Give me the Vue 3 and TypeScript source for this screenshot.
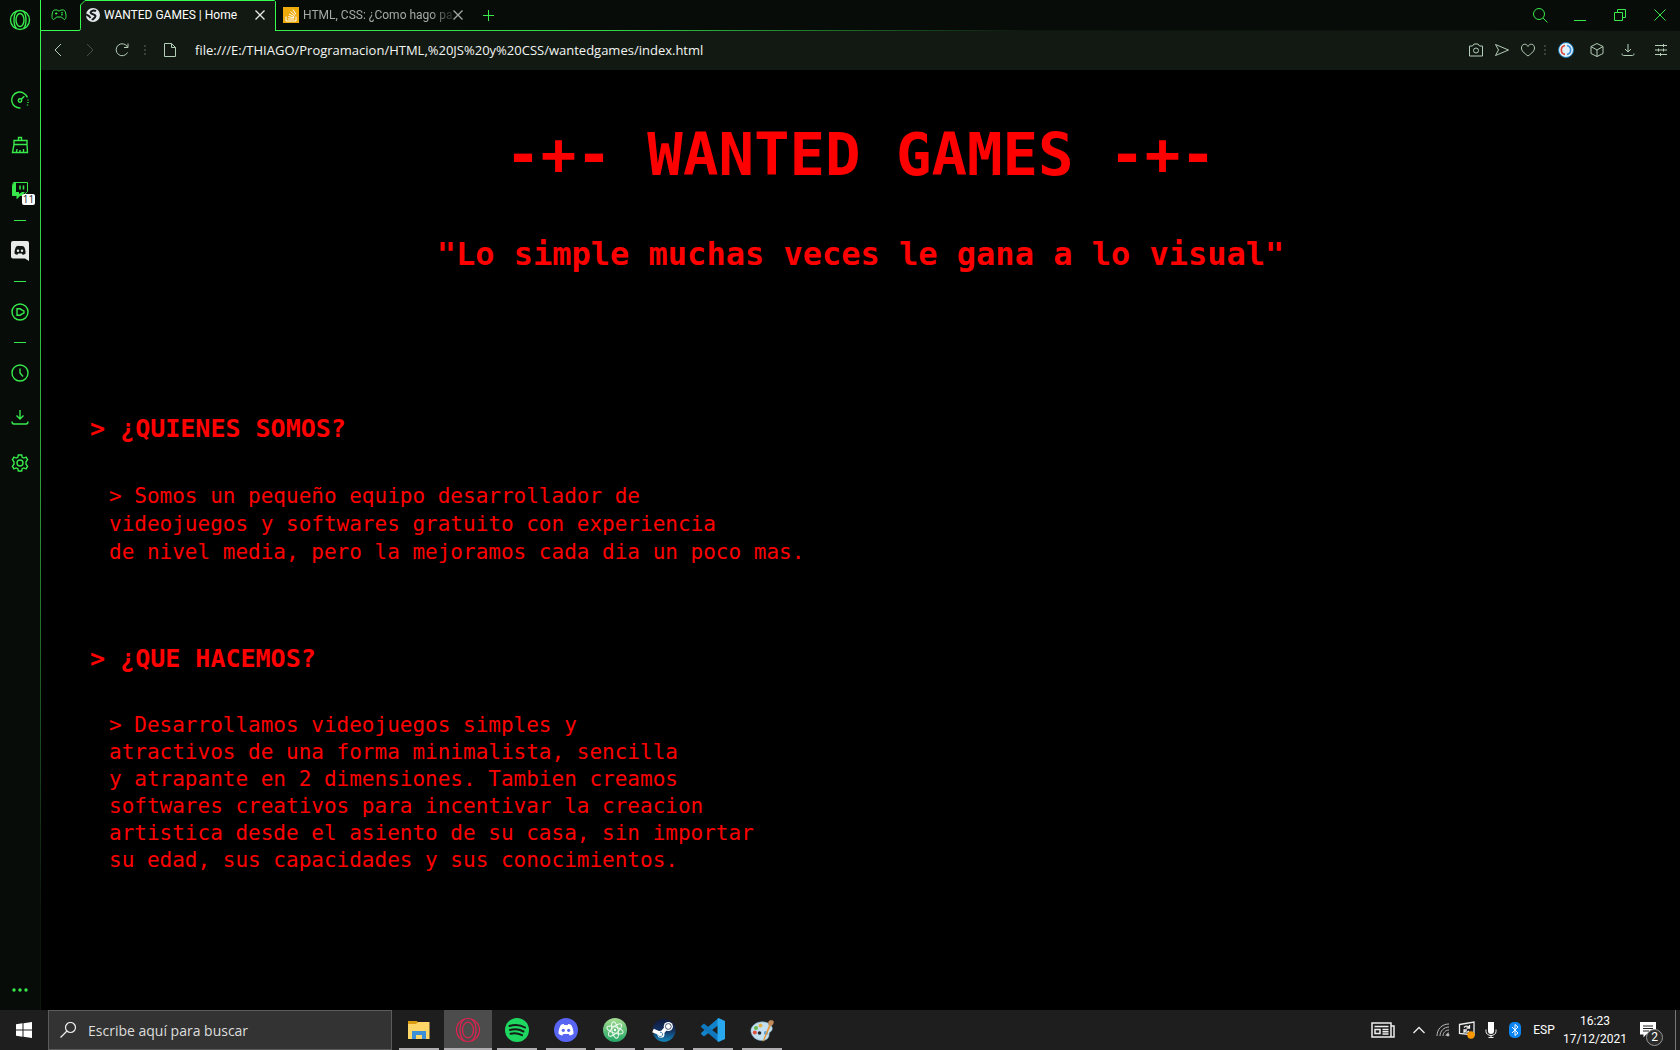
<script setup lang="ts">
import { ref } from 'vue'

interface Section {
  title: string
  lines: string[]
  dense: boolean
}

const address = ref('file:///E:/THIAGO/Programacion/HTML,%20JS%20y%20CSS/wantedgames/index.html')
const query = ref('')

const sections: Section[] = [
  {
    title: '> ¿QUIENES SOMOS?',
    dense: false,
    lines: [
      '> Somos un pequeño equipo desarrollador de',
      'videojuegos y softwares gratuito con experiencia',
      'de nivel media, pero la mejoramos cada dia un poco mas.',
    ],
  },
  {
    title: '> ¿QUE HACEMOS?',
    dense: true,
    lines: [
      '> Desarrollamos videojuegos simples y',
      'atractivos de una forma minimalista, sencilla',
      'y atrapante en 2 dimensiones. Tambien creamos',
      'softwares creativos para incentivar la creacion',
      'artistica desde el asiento de su casa, sin importar',
      'su edad, sus capacidades y sus conocimientos.',
    ],
  },
]
</script>

<template>
  <div class="desktop">
    <div class="browser">
      <nav class="sidebar" aria-label="Barra lateral">
        <button class="side-btn opera" aria-label="Opera GX">
          <svg width="22" height="22" viewBox="0 0 22 22" class="line">
            <circle cx="11" cy="11" r="9.5" />
            <ellipse cx="11" cy="11" rx="4" ry="6.5" />
            <path d="M8 2.200C4 5 4 17 8 19.800M14 2.200c4 2.800 4 14.800 0 17.600" />
          </svg>
        </button>
        <button class="side-btn" aria-label="GX Control">
          <svg width="18" height="18" viewBox="0 0 18 18" class="line">
            <path d="M9.500 17A8 8 0 1 1 16.300 6.500" />
            <circle cx="9" cy="9.500" r="1.700" />
            <path d="M10.300 8.200l3-3" />
            <path d="M17 8.500v1M17 11v1M16.500 13.500v1" />
          </svg>
        </button>
        <button class="side-btn" aria-label="Limpiador GX">
          <svg width="18" height="18" viewBox="0 0 18 18" class="line">
            <path d="M7.500 4.500V1.500h3v3M3 4.500h13v4H3zM3 8.500l-1.500 8h15L16 8.500M5.500 16l.5-3M9 16v-2M12.500 16v-3" />
          </svg>
        </button>
        <button class="side-btn" aria-label="Twitch">
          <svg width="18" height="18" viewBox="0 0 18 18">
            <path d="M2.500 1.500h14v9l-4 4H9l-3 3v-3H1.500v-10z" fill="none" stroke="#37e94b" />
            <path d="M1.500 4l2-2.500h1.500V11h3v2l3-2h3l-3 3.500H9l-3 3v-3H1.500z" fill="#37e94b" />
            <path d="M9 4.500v4M12.500 4.500v4" stroke="#37e94b" stroke-width="1.500" />
          </svg>
          <span class="count">11</span>
        </button>
        <hr />
        <button class="side-btn" aria-label="Discord">
          <svg width="18" height="20" viewBox="0 0 18 20">
            <path d="M2 0h14a2 2 0 0 1 2 2v18l-4-2.500H2a2 2 0 0 1-2-2V2a2 2 0 0 1 2-2z" fill="#e8eae8" />
            <path d="M3.500 12.500c0-3 .7-5.500 1.800-7 1-.6 2-.8 2.500-.5h2.500c.8-.3 1.700 0 2.500.5 1.200 1.500 1.800 4 1.800 7-1 1-2 1.300-3 1.300l-.8-1.200H7.200L6.400 13.800c-1 0-2-.4-2.900-1.300z" fill="#101510" />
            <circle cx="7" cy="9.800" r="1.200" fill="#e8eae8" /><circle cx="11" cy="9.800" r="1.200" fill="#e8eae8" />
          </svg>
        </button>
        <hr />
        <button class="side-btn" aria-label="Reproductor">
          <svg width="18" height="18" viewBox="0 0 18 18" class="line">
            <circle cx="9" cy="9" r="8" />
            <path d="M6 5.800v6.400h3l4-2.400V8.200L9 5.800z" />
          </svg>
        </button>
        <hr />
        <button class="side-btn" aria-label="Historial">
          <svg width="18" height="18" viewBox="0 0 18 18" class="line">
            <circle cx="9" cy="9" r="8" />
            <path d="M9 4.500V9l3 3.500" />
          </svg>
        </button>
        <button class="side-btn" aria-label="Descargas">
          <svg width="18" height="18" viewBox="0 0 18 18" class="line">
            <path d="M9 1v9M5.500 6.500L9 10l3.500-3.500M1 12.500c0 2 .5 2.500 2 2.500h12c1.500 0 2-.5 2-2.500" />
          </svg>
        </button>
        <button class="side-btn" aria-label="Ajustes">
          <svg width="18" height="18" viewBox="0 0 18 18" class="line">
            <circle cx="9" cy="9" r="3" />
            <path d="M7.300 1h3.400l.5 2.300 1.600.8 2.300-.9 1.500 2.600-1.600 2v2.400l1.600 2-1.500 2.600-2.300-.9-1.600.8-.5 2.300H7.300l-.5-2.300-1.600-.8-2.300.9-1.500-2.600 1.600-2V7.800l-1.600-2 1.500-2.600 2.300.9 1.600-.8z" />
          </svg>
        </button>
        <button class="side-btn more" aria-label="Más">
          <svg width="18" height="4" viewBox="0 0 18 4" fill="#37e94b">
            <circle cx="3" cy="2" r="1.700" /><circle cx="9" cy="2" r="1.700" /><circle cx="15" cy="2" r="1.700" />
          </svg>
        </button>
      </nav>

      <div class="window">
        <header class="tabs">
          <button class="corner" aria-label="GX Corner">
            <svg width="16" height="12" viewBox="0 0 16 12" class="line">
              <path d="M3.500 1h3l.8 1h1.400l.8-1h3C14 1 15 4 15 7.500c0 3-1.500 3.500-2.500 2.500l-2-2h-5l-2 2C2.500 11 1 10.500 1 7.500 1 4 2 1 3.500 1z" />
              <path d="M4 4.500h2.400M5.200 3.300v2.400M10 3.800h2M10 5.800h2" />
            </svg>
          </button>
          <div class="tab active">
            <svg class="outline" viewBox="0 0 198 31" preserveAspectRatio="none">
              <path d="M0 31V30.500q1.500 0 1.500-2V5L6 .5H196.500V31" fill="#121912" />
              <path d="M0 30.500q1.500 0 1.500-2V5L6 .5H195.500l1 1V31" fill="none" stroke="#37ff50" />
            </svg>
            <button class="tab-label">
              <svg width="14" height="14" viewBox="0 0 14 14">
                <circle cx="7" cy="7" r="7" fill="#e4e8ec" />
                <path d="M10 3.200C8 2 5 2.500 4.500 4.500c0 2 4.500 1.500 5 3.500 0 2-2.500 2.500-3.500 4M0 6.500l3 1.500 1.500 2" fill="none" stroke="#15191a" stroke-width="2" />
              </svg>
              <span class="caption">WANTED GAMES | Home</span>
            </button>
            <button class="tab-close" aria-label="Cerrar pestaña">
              <svg width="10" height="10" viewBox="0 0 10 10"><path d="M.5.5l9 9M9.500.5l-9 9" stroke="#e8ece8" stroke-width="1.300" /></svg>
            </button>
          </div>
          <div class="tab idle">
            <button class="tab-label">
              <svg width="16" height="16" viewBox="0 0 16 16">
                <path d="M0 0h16v16H0z" fill="#efaa0c" />
                <path d="M3 9.500V14h10V9.500M5 12h6M5.200 9.600l5.800 1.200M6 7l5.300 2.700M7.700 4.500l4.300 4M10 2.500l3 5" fill="none" stroke="#fff" />
              </svg>
              <span class="caption">HTML, CSS: ¿Como hago pa</span>
            </button>
            <button class="tab-close" aria-label="Cerrar pestaña">
              <svg width="10" height="10" viewBox="0 0 10 10"><path d="M.5.5l9 9M9.500.5l-9 9" stroke="#a4aaa4" stroke-width="1.300" /></svg>
            </button>
          </div>
          <button class="add" aria-label="Nueva pestaña">
            <svg width="11" height="11" viewBox="0 0 11 11" class="line"><path d="M5.500 0v11M0 5.500h11" /></svg>
          </button>
          <div class="controls">
            <button aria-label="Buscar pestañas">
              <svg width="16" height="16" viewBox="0 0 16 16" class="line"><circle cx="7" cy="7" r="5.500" /><path d="M11 11l4.500 4.500" /></svg>
            </button>
            <button aria-label="Minimizar">
              <svg width="12" height="14" viewBox="0 0 12 14" class="line"><path d="M0 12.500h12" /></svg>
            </button>
            <button aria-label="Restaurar">
              <svg width="12" height="12" viewBox="0 0 12 12" class="line"><path d="M.5 3.500h8v8h-8zM3.500 3.500v-3h8v8h-3" /></svg>
            </button>
            <button aria-label="Cerrar">
              <svg width="12" height="12" viewBox="0 0 12 12" class="line"><path d="M.5.5l11 11M11.500.5l-11 11" /></svg>
            </button>
          </div>
        </header>

        <div class="toolbar">
          <button class="nav-btn" aria-label="Atrás">
            <svg width="16" height="16" viewBox="0 0 16 16"><path d="M11 2L5 8l6 6" /></svg>
          </button>
          <button class="nav-btn off" aria-label="Adelante">
            <svg width="16" height="16" viewBox="0 0 16 16"><path d="M5 2l6 6-6 6" /></svg>
          </button>
          <button class="nav-btn" aria-label="Recargar">
            <svg width="16" height="16" viewBox="0 0 16 16"><path d="M13.500 10.500a6 6 0 1 1 0-5.500M14 1.500v4h-4" /></svg>
          </button>
          <span class="grip"></span>
          <button class="file-btn" aria-label="Información del sitio">
            <svg width="14" height="16" viewBox="0 0 14 16"><path d="M1.500 1.500h7l4 4v9h-11zM8.500 1.500v4h4" /></svg>
          </button>
          <input v-model="address" class="address" type="text" aria-label="Dirección" spellcheck="false" />
          <button class="tool" aria-label="Captura">
            <svg width="16" height="14" viewBox="0 0 16 14"><path d="M1.500 3h3l1.500-2h4l1.500 2h3v10h-13z" /><circle cx="8" cy="7.500" r="2.500" /></svg>
          </button>
          <button class="tool" aria-label="Mi Flow">
            <svg width="16" height="14" viewBox="0 0 16 14"><path d="M1.500 1.500L14.500 7l-13 5.500L4.500 7z" /></svg>
          </button>
          <button class="tool" aria-label="Favoritos">
            <svg width="16" height="14" viewBox="0 0 16 14"><path d="M8 13C4 10 1.500 8 1.500 5 1.500 .5 6.500 0 8 3.500 9.500 0 14.500 .5 14.500 5c0 3-2.500 5-6.500 8z" /></svg>
          </button>
          <span class="grip small"></span>
          <button class="tool wide" aria-label="Extensión">
            <svg width="16" height="16" viewBox="0 0 16 16">
              <circle cx="8" cy="8" r="7.500" fill="#dff1fb" stroke="#1474ac" />
              <path d="M7 3.500A4.600 4.600 0 0 0 7 12.500" stroke="#df4334" stroke-width="1.600" />
              <path d="M9 3.500A4.600 4.600 0 0 1 9 12.500" stroke="#3d8ed8" stroke-width="1.600" />
            </svg>
          </button>
          <button class="tool cube" aria-label="Extensiones">
            <svg width="14" height="16" viewBox="0 0 14 16"><path d="M7 1.500l6 3v7l-6 3-6-3v-7zM1 4.500L7 8l6-3.500M7 8v6.500" /></svg>
          </button>
          <button class="tool wide" aria-label="Descargas">
            <svg width="14" height="14" viewBox="0 0 14 14"><path d="M7 1v8M4 6l3 3 3-3M1 10.500c0 1.500.5 2 1.500 2h9c1 0 1.500-.5 1.500-2" /></svg>
          </button>
          <button class="tool last" aria-label="Configuración fácil">
            <svg width="12" height="12" viewBox="0 0 12 12"><path d="M0 1.500h12M0 6h12M0 10.500h12M8.500 0v3M3.500 4.500v3M8.500 4.500v3M5.500 9v3" /></svg>
          </button>
        </div>

        <main class="page">
          <h1>-+- WANTED GAMES -+-</h1>
          <p class="motto">"Lo simple muchas veces le gana a lo visual"</p>
          <section v-for="section in sections" :key="section.title">
            <h2>{{ section.title }}</h2>
            <p :class="{ dense: section.dense }">
              <template v-for="(line, i) in section.lines" :key="i">{{ line }}<br /></template>
            </p>
          </section>
        </main>
      </div>
    </div>

    <footer class="taskbar">
      <button class="start" aria-label="Inicio">
        <svg width="16" height="16" viewBox="0 0 16 16" fill="#fff"><path d="M0 2.200l6.500-.9v6.200H0zM7.500 1.200L16 0v7.500H7.500zM0 8.500h6.500v6.200L0 13.800zM7.500 8.500H16V16l-8.500-1.200z" /></svg>
      </button>
      <label class="search">
        <svg width="16" height="16" viewBox="0 0 16 16" fill="none" stroke="#eee" stroke-width="1.200"><circle cx="10.500" cy="5.500" r="5" /><path d="M7 9l-6.500 6.500" /></svg>
        <input v-model="query" type="text" placeholder="Escribe aquí para buscar" aria-label="Buscar" />
      </label>
      <div class="apps">
        <button aria-label="Explorador de archivos">
          <svg width="24" height="24" viewBox="0 0 24 24">
            <path d="M1 3h9l1 2h11v3H1z" fill="#dc9d12" /><path d="M1 6h8l2-2h11.500v17H1z" fill="#ffd768" />
            <path d="M5 21v-8h14v8h-4v-4H9v4z" fill="#3d8fd6" />
          </svg>
        </button>
        <button class="current" aria-label="Opera GX">
          <svg width="26" height="26" viewBox="0 0 26 26" fill="none" stroke="#e3204f" stroke-width="1.200">
            <circle cx="13" cy="13" r="11.500" /><ellipse cx="13" cy="13" rx="5.500" ry="7.800" />
            <path d="M9.500 2C3.500 6 3.500 20 9.500 24M16.500 2c6 4 6 18 0 22" />
          </svg>
        </button>
        <button aria-label="Spotify">
          <svg width="24" height="24" viewBox="0 0 24 24">
            <circle cx="12" cy="12" r="12" fill="#1ed760" />
            <path d="M4.500 8c5-1.500 11-1 15.500 1.500M5 12c4.500-1.300 9.500-.7 13.500 1.500M5.500 15.800c4-1 7.800-.5 11.500 1.400" fill="none" stroke="#161b18" stroke-width="2" stroke-linecap="round" />
          </svg>
        </button>
        <button aria-label="Discord">
          <svg width="24" height="24" viewBox="0 0 24 24">
            <circle cx="12" cy="12" r="12" fill="#5865f2" />
            <path d="M4.500 15.800c0-3.600.8-6.400 2.300-8.800 1-.6 2-.9 3-1l.6 1h3.200l.6-1c1 .1 2 .4 3 1 1.500 2.400 2.300 5.200 2.300 8.800-1.200 1-2.500 1.500-3.800 1.700l-1-1.500H9.300l-1 1.500c-1.300-.2-2.600-.7-3.800-1.700z" fill="#fff" />
            <circle cx="9.300" cy="12.300" r="1.600" fill="#5865f2" /><circle cx="14.700" cy="12.300" r="1.600" fill="#5865f2" />
          </svg>
        </button>
        <button aria-label="Atom">
          <svg width="24" height="24" viewBox="0 0 24 24">
            <defs><linearGradient id="atom" x1="0" y1="0" x2="0" y2="1"><stop offset="0" stop-color="#a5dc90" /><stop offset="1" stop-color="#22a565" /></linearGradient></defs>
            <circle cx="12" cy="12" r="12" fill="url(#atom)" />
            <g fill="none" stroke="#eefaf0"><ellipse cx="12" cy="12" rx="3.200" ry="8.500" transform="rotate(-12 12 12)" /><ellipse cx="12" cy="12" rx="3.200" ry="8.500" transform="rotate(48 12 12)" /><ellipse cx="12" cy="12" rx="3.200" ry="8.500" transform="rotate(108 12 12)" /></g>
            <circle cx="12" cy="12" r="1.200" fill="#fff" />
          </svg>
        </button>
        <button aria-label="Steam">
          <svg width="24" height="24" viewBox="0 0 24 24">
            <defs><linearGradient id="steam" x1="0" y1="0" x2="0" y2="1"><stop offset="0" stop-color="#101a3e" /><stop offset=".5" stop-color="#12305f" /><stop offset="1" stop-color="#1689bd" /></linearGradient></defs>
            <path d="M1 9a11.500 11.500 0 1 1 .5 8z" fill="url(#steam)" />
            <path d="M1 12.500l8 3.500 6-7" fill="none" stroke="#fff" stroke-width="3.800" />
            <circle cx="9" cy="16.300" r="3.500" fill="#fff" /><path d="M6.500 17.500a2.200 2.200 0 1 0 1.500-3.300" fill="none" stroke="#176a98" stroke-width=".8" />
            <circle cx="16.300" cy="8.500" r="4.600" fill="#fff" /><circle cx="16.300" cy="8.500" r="2.900" fill="none" stroke="#1c3055" stroke-width=".8" />
          </svg>
        </button>
        <button aria-label="Visual Studio Code">
          <svg width="24" height="24" viewBox="0 0 24 24">
            <path d="M17.500 0v7L3 18.500l-3-2.500v-1z" fill="#1283cb" /><path d="M17.500 24v-7L3 5.500 0 8v1z" fill="#0f78be" />
            <path d="M17.500 0L24 3v18l-6.500 3-1-1V1z" fill="#28a8ef" />
          </svg>
        </button>
        <button aria-label="Paint">
          <svg width="24" height="24" viewBox="0 0 24 24">
            <path d="M1 14C0 8 7 3 14 4c7 .8 9 5 8 8-.8 2-3 2-3 4 .5 4-3 7-8 6.500S2 19 1 14z" fill="#c3dff0" stroke="#88aec7" stroke-width=".6" />
            <circle cx="6" cy="10" r="2" fill="#67b84b" /><circle cx="10.500" cy="7.500" r="2" fill="#e3b24c" /><circle cx="4.800" cy="14.500" r="2" fill="#de5041" /><circle cx="9.500" cy="15" r="1.800" fill="#25272a" /><circle cx="16" cy="15" r="2" fill="#559bd5" />
            <path d="M12.500 23.500L19 7l1.800.8L14 23z" fill="#e39a3e" /><path d="M18.500 7c-1-3 .5-4.500 2-5 .5 1 2-.5 3 1 .8 2-.5 4-2.500 5z" fill="#c18a58" />
          </svg>
        </button>
      </div>
      <div class="tray">
        <button class="news" aria-label="Noticias">
          <svg width="24" height="16" viewBox="0 0 24 16" fill="none" stroke="#eee" stroke-width="1.500"><path d="M1 1h19v14H1zM20 4h3v11h-3M3.500 4.500h14M4 7.500h5v4H4zM11.500 7.500h6M11.500 9.700h6M11.500 12h6" /></svg>
        </button>
        <button aria-label="Iconos ocultos">
          <svg width="12" height="8" viewBox="0 0 12 8" fill="none" stroke="#eee" stroke-width="1.300"><path d="M.5 7L6 1.500 11.500 7" /></svg>
        </button>
        <button aria-label="Red">
          <svg width="14" height="14" viewBox="0 0 14 14" fill="none" stroke="#bbb"><path d="M1 13C1 6 6 1 13 1M4 13c0-5 4-9 9-9M7 13c0-3.300 2.700-6 6-6M10 13c0-1.700 1.300-3 3-3" /><circle cx="12" cy="12" r="1" fill="#fff" /></svg>
        </button>
        <button aria-label="Windows Update">
          <svg width="18" height="18" viewBox="0 0 18 18" fill="none" stroke="#eee" stroke-width="1.300"><path d="M1.500 3.500L16 1v13l-14.500-1.500z" /><path d="M6 6.500c1.500-2 4-1.500 5 0M11.500 4v3h-3M11 10c-1.500 1.500-3.500 1-4.500 0M6 12V9h3" /><circle cx="13" cy="14" r="3.700" fill="#ff9800" stroke="none" /></svg>
        </button>
        <button aria-label="Micrófono">
          <svg width="12" height="16" viewBox="0 0 12 16"><path d="M3 0h6v9a3 3 0 0 1-6 0z" fill="#fff" /><path d="M1 7.500v2a5 4 0 0 0 10 0v-2M6 13v3M3.500 15.500h5" fill="none" stroke="#eee" /></svg>
        </button>
        <button aria-label="Bluetooth">
          <svg width="12" height="16" viewBox="0 0 12 16"><rect width="12" height="16" rx="5" fill="#0a84f2" /><path d="M3 5l6 6-3 2.500v-11L9 5l-6 6" fill="none" stroke="#fff" /></svg>
        </button>
        <button class="lang">ESP</button>
        <button class="clock"><time>16:23</time><time>17/12/2021</time></button>
        <button class="notes" aria-label="Notificaciones">
          <svg width="16" height="16" viewBox="0 0 16 16"><path d="M0 0h16v12.500H6L3.500 15.500v-3H0z" fill="#fff" /><path d="M3 4h10M3 6.500h10M3 9h6" stroke="#222" /></svg>
          <span>2</span>
        </button>
      </div>
    </footer>
  </div>
</template>

<style>
body { background: #000; }
</style>

<style scoped>
* { box-sizing: border-box; }
button { margin: 0; padding: 0; border: 0; background: none; color: inherit; font: inherit; display: flex; align-items: center; justify-content: center; flex: none; }
svg { display: block; flex: none; }
input { border: 0; padding: 0; outline: 0; background: none; font: inherit; min-width: 0; }
.line { fill: none; stroke: #37e94b; }
.desktop { min-height: 100vh; display: flex; flex-direction: column; background: #000; font-family: "Open Sans", "Noto Sans", sans-serif; color: #fff; }
.browser { flex: 1; display: flex; }

.sidebar { width: 40px; flex: none; display: flex; flex-direction: column; align-items: center; padding-right: 1px; background: #080c08; }
.sidebar .line { stroke-width: 1.4; }
.side-btn { position: relative; width: 39px; height: 45px; }
.opera { height: 40px; margin-bottom: 37px; }
.sidebar hr { width: 12px; height: 1px; margin: 8px 0 7px; border: 0; background: #37e94b; }
.more { margin-top: auto; height: 40px; }
.count { position: absolute; left: 22px; top: 27px; width: 13px; height: 11px; border-radius: 2px; background: #fff; color: #20242c; font-size: 10px; line-height: 11px; text-align: center; }

.window { flex: 1; min-width: 0; display: flex; flex-direction: column; border-left: 1px solid; border-image: linear-gradient(#37ff50, #2ea43c 45%, #0c160d 90%) 1; background: #000; }
.tabs { position: relative; display: flex; height: 31px; background: linear-gradient(90deg, #37ff50, #2fd544 35%, #0d170e 60%, #0a0f0a) bottom / 100% 1px no-repeat #080c08; font-family: Roboto, "Open Sans", sans-serif; font-size: 12px; }
.corner { width: 38px; height: 30px; padding-right: 2px; }
.tab { position: relative; display: flex; align-items: center; height: 31px; }
.active { width: 198px; padding: 0 7px 1px; }
.outline { position: absolute; left: 0; top: 0; width: 100%; height: 31px; }
.tab-label { position: relative; flex: 1; min-width: 0; justify-content: flex-start; gap: 4px; white-space: nowrap; }
.tab-close { position: relative; width: 20px; height: 20px; }
.idle { width: 191px; padding: 0 0 1px 6px; color: #a4aaa4; }
.idle .caption { mask-image: linear-gradient(90deg, #000 85%, rgba(0, 0, 0, 0.2)); }
.add { width: 40px; height: 30px; }
.controls { display: flex; margin-left: auto; }
.controls button { width: 40px; height: 29px; }

.toolbar { display: flex; align-items: center; height: 39px; padding: 0 3px 2px 1px; background: #121912; }
.toolbar svg { fill: none; stroke: #b4cdb7; }
.nav-btn { width: 32px; height: 32px; }
.toolbar .off svg { stroke: #485048; }
.grip { flex: none; width: 2px; height: 10px; margin: 0 6px; background: repeating-linear-gradient(#3a413a 0 2px, transparent 2px 4px); }
.grip.small { margin: 0 3px; }
.file-btn { width: 36px; height: 32px; margin-right: 7px; }
.address { flex: 1; color: #f2f5f2; font-size: 13px; line-height: 20px; }
.tool { width: 26px; height: 32px; }
.tool.wide { width: 34px; }
.tool.cube { width: 28px; }
.tool.last { width: 32px; }

.page { flex: 1; padding: 50px 0 40px; color: #f00; font-family: "DejaVu Sans Mono", monospace; }
h1, h2, p { margin: 0; }
h1 { font-size: 59px; line-height: 70px; text-align: center; }
.motto { margin: 44px 0 140px; font-size: 32px; line-height: 40px; font-weight: bold; text-align: center; }
section { padding-left: 49px; margin-bottom: 78px; }
h2 { font-size: 25px; line-height: 30px; margin-bottom: 38px; }
section p { padding-left: 19px; font-size: 21px; line-height: 28px; }
section .dense { line-height: 27px; }
section:last-child { margin-bottom: 0; }

.taskbar { display: flex; height: 40px; background: #1e1e1e; }
.start { width: 48px; }
.search { display: flex; align-items: center; gap: 12px; width: 344px; padding: 0 11px; border: 1px solid #5c5c5c; background: #333; }
.search input { flex: 1; padding-top: 2px; color: #ddd; font-size: 14px; line-height: 20px; }
.search input::placeholder { color: #ddd; opacity: 1; }
.apps { display: flex; gap: 1px; margin-left: 3px; }
.apps button { width: 48px; background: linear-gradient(#b0aeb0, #b0aeb0) bottom / 40px 2px no-repeat; }
.apps .current { background: linear-gradient(#b0aeb0, #b0aeb0) bottom / 48px 2px no-repeat #4c4c4c; }
.tray { display: flex; margin-left: auto; padding-right: 4px; font-family: Roboto, "Open Sans", sans-serif; font-size: 12px; }
.tray button { width: 24px; }
.tray .news { width: 48px; }
.tray .lang { width: 34px; }
.tray .clock { width: 68px; flex-direction: column; line-height: 18px; }
.tray .notes { position: relative; width: 47px; padding-right: 8px; border-right: 1px solid #777; }
.notes span { position: absolute; left: 17px; top: 19px; width: 17px; height: 17px; border: 1px solid #999; border-radius: 50%; background: #2b2b2b; font-size: 12px; line-height: 15px; text-align: center; }
</style>
